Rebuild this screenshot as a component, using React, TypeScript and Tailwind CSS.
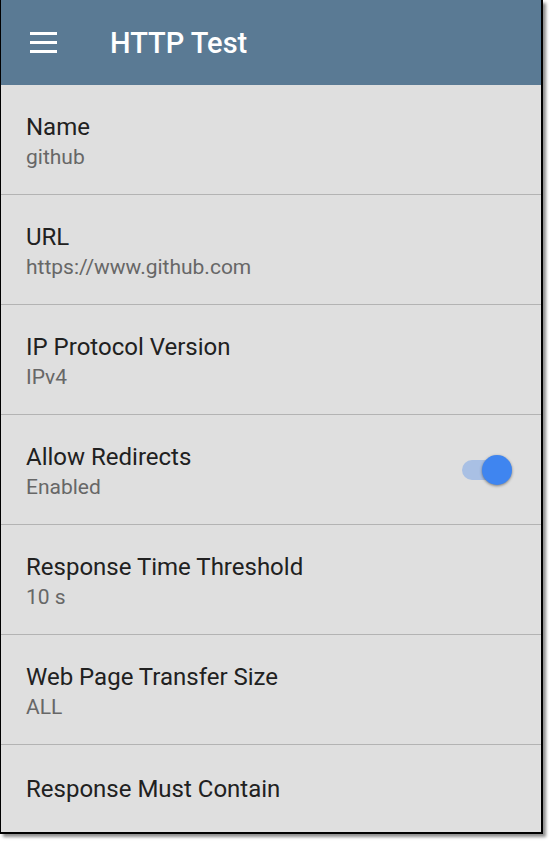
import React from "react";

const rows: { label: string; value?: string; toggle?: boolean }[] = [
  { label: "Name", value: "github" },
  { label: "URL", value: "https://www.github.com" },
  { label: "IP Protocol Version", value: "IPv4" },
  { label: "Allow Redirects", value: "Enabled", toggle: true },
  { label: "Response Time Threshold", value: "10 s" },
  { label: "Web Page Transfer Size", value: "ALL" },
  { label: "Response Must Contain" },
];

function Toggle() {
  return (
    <div className="relative mr-[29px] h-[30px] w-[50px]">
      <div className="absolute left-0 top-[5px] h-[20px] w-[42px] rounded-full bg-[#a9c0e4]" />
      <div className="absolute right-0 top-0 h-[30px] w-[30px] rounded-full bg-[#3f85f0] shadow-[0_1px_3px_rgba(0,0,0,0.45)]" />
    </div>
  );
}

export default function App() {
  return (
    <div className="min-h-screen bg-white" style={{ fontFamily: "Roboto, 'Liberation Sans', sans-serif" }}>
      <div className="w-[543px] border-b-2 border-l border-r-2 border-black bg-[#dfdfdf] shadow-[3px_3px_3px_rgba(0,0,0,0.45)]">
        <header className="flex h-[85px] items-center bg-[#5a7a94]">
          <div className="ml-[29px] flex w-[27px] flex-col gap-[6px]">
            <span className="h-[3px] bg-white" />
            <span className="h-[3px] bg-white" />
            <span className="h-[3px] bg-white" />
          </div>
          <h1 className="ml-[53px] mt-[3px] text-[29px] font-medium text-white">HTTP Test</h1>
        </header>
        {rows.map((r, i) => (
          <div
            key={r.label}
            className={
              "flex items-center justify-between " +
              (i < rows.length - 1 ? "h-[110px] border-b border-[#b3b3b3]" : "h-[87px]")
            }
          >
            <div className={"pl-[25px] " + (r.value ? "pt-[5px]" : "")}>
              <div className="text-[24px] leading-[30px] text-[#212121]">{r.label}</div>
              {r.value && <div className="text-[21px] leading-[31px] text-[#676767]">{r.value}</div>}
            </div>
            {r.toggle && <Toggle />}
          </div>
        ))}
      </div>
    </div>
  );
}
